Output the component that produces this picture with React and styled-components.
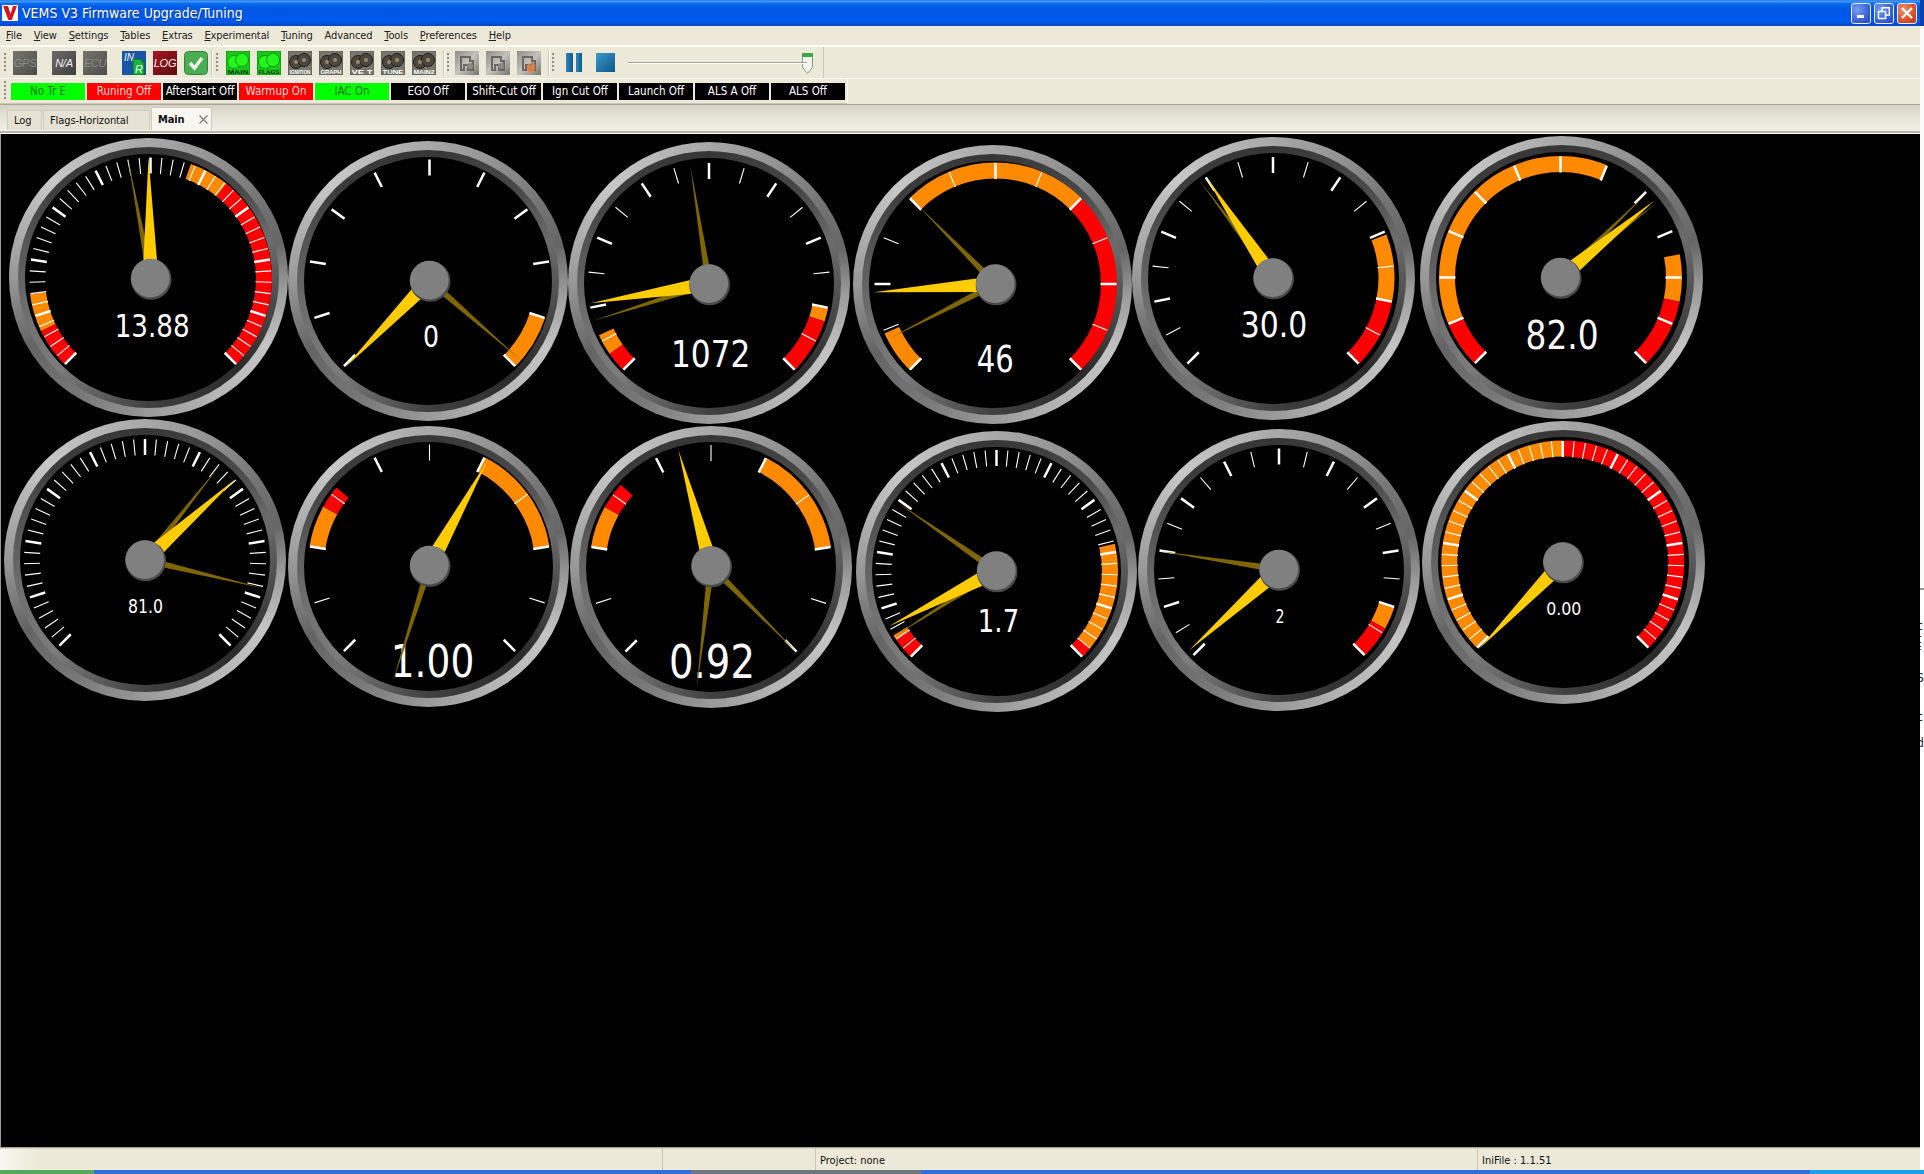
import React from "react";
import styled, { createGlobalStyle } from "styled-components";

const UI_FONT = `"DejaVu Sans Condensed", "Roboto", "Liberation Sans", sans-serif`;

const GlobalStyle = createGlobalStyle`
  html, body {
    margin: 0;
    padding: 0;
    width: 1924px;
    height: 1174px;
    overflow: hidden;
    background: #fff;
  }
`;

const ORANGE = "#ff8a00";
const RED = "#ff0000";

/* screen coordinates, read off the screenshot. x/y/r = bezel, hx/hy = hub */
const gauges = [
  { x: 148, y: 277, r: 139.5, hx: 150, hy: 278, div: 50, major: 5, value: "13.88", fs: 32, tx: 151.7, ty: 336, tw: 75,
    tip: [148, 157], ghosts: [[127.6, 159.3]],
    arcs: [[-135, -115.6, RED], [-115.6, -97.5, ORANGE], [19.4, 38.8, ORANGE], [38.8, 135, RED]] },
  { x: 427.5, y: 280.5, r: 140, hx: 429, hy: 280, div: 10, major: 1, value: "0", fs: 30, tx: 430.5, ty: 346.7, tw: 16,
    tip: [344.8, 366.7], ghosts: [[519.8, 359.3]],
    arcs: [[108, 135, ORANGE]] },
  { x: 709, y: 283, r: 141, hx: 709, hy: 284, div: 16, major: 2, value: "1072", fs: 38, tx: 710.7, ty: 366.7, tw: 79.5,
    tip: [590.3, 303.3], ghosts: [[690.2, 165], [593.3, 320.7]],
    arcs: [[-135, -125, RED], [-125, -115, ORANGE], [101.5, 108, ORANGE], [108, 135, RED]] },
  { x: 992, y: 284.5, r: 139.5, hx: 995, hy: 284, div: 12, major: 2, value: "46", fs: 37, tx: 994.7, ty: 371.7, tw: 37,
    tip: [873, 292.3], ghosts: [[917, 205], [889.3, 338.3]],
    arcs: [[-135, -114, ORANGE], [-45, 45, ORANGE], [45, 135, RED]] },
  { x: 1273.5, y: 278.5, r: 141.5, hx: 1273, hy: 278, div: 16, major: 2, value: "30.0", fs: 35, tx: 1274, ty: 336.7, tw: 66.5,
    tip: [1206.5, 177.7], ghosts: [[1200.4, 181.7]],
    arcs: [[69, 101.5, ORANGE], [101.5, 135, RED]] },
  { x: 1561, y: 277, r: 141.5, hx: 1560, hy: 277, div: 12, major: 1, value: "82.0", fs: 39, tx: 1561.6, ty: 348.3, tw: 73,
    tip: [1654, 200], ghosts: [[1647.4, 191.7], [1657, 201.7]],
    arcs: [[-135, -112.5, RED], [-112.5, 22.5, ORANGE], [79, 101.5, ORANGE], [101.5, 135, RED]] },
  { x: 144.5, y: 560, r: 141, hx: 144.5, hy: 560, div: 50, major: 5, value: "81.0", fs: 20, tx: 145, ty: 613.3, tw: 35,
    tip: [235, 479], ghosts: [[219, 465.7], [263.4, 588.3]], arcs: [] },
  { x: 428, y: 566, r: 140.5, hx: 429, hy: 565, div: 10, major: 2, value: "1.00", fs: 45, tx: 432, ty: 676.7, tw: 83.6,
    tip: [487.6, 459.3], ghosts: [[392.2, 681.7]],
    arcs: [[-81, -61, ORANGE], [-61, -50, RED], [27, 81, ORANGE]] },
  { x: 711, y: 567, r: 141, hx: 711, hy: 566, div: 10, major: 2, value: "0.92", fs: 46, tx: 712, ty: 678.3, tw: 86,
    tip: [678.4, 450], ghosts: [[696.9, 687.7], [797.5, 653]],
    arcs: [[-81, -61, ORANGE], [-61, -48, RED], [27, 81, ORANGE]] },
  { x: 996, y: 571.5, r: 140.5, hx: 996, hy: 571, div: 50, major: 5, value: "1.7", fs: 32, tx: 998, ty: 631.7, tw: 41.4,
    tip: [888.5, 626.3], ghosts: [[896.7, 502.3], [894.8, 635.7]],
    arcs: [[-135, -124, RED], [-124, -122, ORANGE], [77, 129.5, ORANGE], [129.5, 135, RED]] },
  { x: 1279, y: 569.5, r: 141, hx: 1279, hy: 569, div: 20, major: 2, value: "2", fs: 19, tx: 1280, ty: 622, tw: 9,
    tip: [1188.9, 650], ghosts: [[1160.2, 550.7]],
    arcs: [[108, 119, ORANGE], [119, 135, RED]] },
  { x: 1563.7, y: 562.5, r: 141.5, hx: 1563, hy: 562, div: 50, major: 5, value: "0.00", fs: 18.5, tx: 1564, ty: 615, tw: 35.3,
    tip: [1479, 649], ghosts: [],
    arcs: [[-135, 0, ORANGE], [0, 135, RED]] },
];

const menus = [
  ["F", "ile"], ["V", "iew"], ["S", "ettings"], ["T", "ables"], ["E", "xtras"], ["E", "xperimental"],
  ["T", "uning"], ["", "Advanced"], ["T", "ools"], ["P", "references"], ["H", "elp"],
];

const flags = [
  ["No Tr E", "on"], ["Runing Off", "alert"], ["AfterStart Off", "off"], ["Warmup On", "alert"],
  ["IAC On", "on"], ["EGO Off", "off"], ["Shift-Cut Off", "off"], ["Ign Cut Off", "off"],
  ["Launch Off", "off"], ["ALS A Off", "off"], ["ALS Off", "off"],
];

const polar = (cx, cy, r, deg) => {
  const a = (deg * Math.PI) / 180;
  return [cx + r * Math.sin(a), cy - r * Math.cos(a)];
};

const sector = (cx, cy, r0, r1, a0, a1) => {
  const [x0, y0] = polar(cx, cy, r1, a0);
  const [x1, y1] = polar(cx, cy, r1, a1);
  const [x2, y2] = polar(cx, cy, r0, a1);
  const [x3, y3] = polar(cx, cy, r0, a0);
  const large = a1 - a0 > 180 ? 1 : 0;
  return `M${x0} ${y0}A${r1} ${r1} 0 ${large} 1 ${x1} ${y1}L${x2} ${y2}A${r0} ${r0} 0 ${large} 0 ${x3} ${y3}Z`;
};

const needle = (hx, hy, tip, halfBase) => {
  const dx = tip[0] - hx;
  const dy = tip[1] - hy;
  const len = Math.hypot(dx, dy);
  const nx = (-dy / len) * halfBase;
  const ny = (dx / len) * halfBase;
  return `${hx + nx},${hy + ny} ${tip[0]},${tip[1]} ${hx - nx},${hy - ny}`;
};

function Gauge({ g }) {
  const ticks = [];
  for (let i = 0; i <= g.div; i++) {
    const deg = -135 + (i * 270) / g.div;
    const isMajor = i % g.major === 0;
    const [x1, y1] = polar(g.hx, g.hy, 105, deg);
    const [x2, y2] = polar(g.hx, g.hy, 121, deg);
    ticks.push(
      <line key={i} x1={x1} y1={y1} x2={x2} y2={y2} stroke="#fff" strokeWidth={isMajor ? 2.5 : 1.1} />
    );
  }
  return (
    <GaugeBox $x={g.x} $y={g.y} $r={g.r}>
      <Bezel />
      <Dial viewBox={`${g.x - g.r} ${g.y - g.r} ${g.r * 2} ${g.r * 2}`}>
        {g.arcs.map(([a0, a1, color], i) => (
          <path key={i} d={sector(g.hx, g.hy, 105.5, 121.5, a0, a1)} fill={color} />
        ))}
        {ticks}
        <ValueText
          x={g.tx}
          y={g.ty}
          fontSize={g.fs}
          textLength={g.tw}
          lengthAdjust="spacingAndGlyphs"
        >
          {g.value}
        </ValueText>
        {g.ghosts.map((t, i) => (
          <polygon key={i} points={needle(g.hx, g.hy, t, 3.6)} fill="#7f6600" />
        ))}
        <polygon points={needle(g.hx, g.hy, g.tip, 8)} fill="#ffcc00" />
        <circle cx={g.hx + 0.6} cy={g.hy + 0.8} r={20.4} fill="#4a4a4a" />
        <circle cx={g.hx - 0.2} cy={g.hy - 0.4} r={19.4} fill="#808080" />
      </Dial>
    </GaugeBox>
  );
}

function GaugeTile({ label, lit }) {
  const face = lit ? "#25f51f" : "#4c4840";
  const edge = lit ? "#0a9a0a" : "#1e1c18";
  return (
    <svg width="24" height="24" viewBox="0 0 24 24">
      <rect width="24" height="24" fill={lit ? "#17c917" : "#77756c"} stroke={lit ? "#0b8a0b" : "#5c5a52"} />
      <circle cx="8" cy="11" r="6.5" fill={face} stroke={edge} />
      <circle cx="16" cy="9" r="6.5" fill={face} stroke={edge} />
      {!lit && <circle cx="8" cy="11" r="2" fill="#9a8a70" />}
      {!lit && <circle cx="16" cy="9" r="2" fill="#9a8a70" />}
      <text x="12" y="23" textAnchor="middle" fontSize="5.4" fontFamily="Liberation Sans, sans-serif"
        fontWeight="700" fill={lit ? "#04320a" : "#fff"} textLength="21" lengthAdjust="spacingAndGlyphs">
        {label}
      </text>
    </svg>
  );
}

function EngineTile({ flame }) {
  return (
    <svg width="24" height="24" viewBox="0 0 24 24">
      <defs>
        <linearGradient id="engineBg" x1="0" y1="0" x2="1" y2="1">
          <stop offset="0" stopColor="#8f8d88" />
          <stop offset="0.5" stopColor="#c4c2bc" />
          <stop offset="1" stopColor="#77756f" />
        </linearGradient>
      </defs>
      <rect width="24" height="24" fill="url(#engineBg)" />
      <path d="M6 6h9v4h3v9h-5v-5H9v5H6z" fill="none" stroke="#6a6661" strokeWidth="2" />
      <circle cx="15" cy="15" r="3" fill="#8c8983" />
      {flame && <path d="M13 21c-4-2-4-6-1-9 0 3 2 2 2 5 2-2 1-5 0-7 4 3 6 9 1 11z" fill="#e2803a" />}
    </svg>
  );
}

export default function App() {
  return (
    <>
      <GlobalStyle />
      <Screen>
        <Upper>
          <Window>
            <TitleBar>
              <svg width="16" height="16" viewBox="0 0 16 16">
                <rect width="16" height="16" fill="#fff" />
                <polygon points="1,1 6,1 8.5,9 11,1 15,1 9.8,15 6.4,15" fill="#d8141c" />
              </svg>
              <TitleText>VEMS V3 Firmware Upgrade/Tuning</TitleText>
              <WinButtons>
                <WinButton>
                  <svg width="12" height="12" viewBox="0 0 12 12">
                    <rect x="2" y="8" width="7" height="3" fill="#fff" />
                  </svg>
                </WinButton>
                <WinButton>
                  <svg width="14" height="14" viewBox="0 0 14 14" fill="none" stroke="#fff">
                    <rect x="1.5" y="5.5" width="7" height="7" strokeWidth="1.4" />
                    <path d="M5 5V1.7h7.3V9H9" strokeWidth="1.4" />
                  </svg>
                </WinButton>
                <WinButton $close>
                  <svg width="14" height="14" viewBox="0 0 14 14" stroke="#fff" strokeWidth="2.2">
                    <path d="M2 2l10 10M12 2L2 12" />
                  </svg>
                </WinButton>
              </WinButtons>
            </TitleBar>

            <MenuBar>
              {menus.map(([first, rest], i) => (
                <MenuItem key={i}>
                  {first && <u>{first}</u>}
                  {rest}
                </MenuItem>
              ))}
            </MenuBar>

            <ToolRow>
              <Toolbar $width={824}>
                <Grip />
                <ToolGroup $ml={7}>
                  <LcdTile $kind="dim">GPS</LcdTile>
                </ToolGroup>
                <ToolGroup $ml={15}>
                  <LcdTile $kind="mid">N/A</LcdTile>
                  <LcdTile $kind="dim">ECU</LcdTile>
                </ToolGroup>
                <ToolGroup $ml={15}>
                  <svg width="24" height="24" viewBox="0 0 24 24">
                    <rect width="24" height="24" fill="#1b55a8" />
                    <text x="2" y="10" fontSize="10" fontStyle="italic" fill="#fff" fontFamily="Liberation Sans, sans-serif">IN</text>
                    <path d="M11 8h7l4 4v12H11z" fill="#14b43c" stroke="#0a6a22" />
                    <text x="13" y="22" fontSize="11" fontStyle="italic" fill="#fff" fontFamily="Liberation Sans, sans-serif">R</text>
                  </svg>
                  <LcdTile $kind="log">LOG</LcdTile>
                  <svg width="24" height="24" viewBox="0 0 24 24">
                    <rect x="0.5" y="0.5" width="23" height="23" rx="4" fill="#4cae52" stroke="#2f8238" />
                    <path d="M6 12l4.5 5L18 7" fill="none" stroke="#eef5ea" strokeWidth="3.4" />
                  </svg>
                </ToolGroup>
                <Separator $ml={3} />
                <Grip $ml={4} />
                <ToolGroup $ml={8}>
                  <GaugeTile label="MAIN" lit />
                  <GaugeTile label="FLAGS" lit />
                  <GaugeTile label="IGNITION" />
                  <GaugeTile label="GRAPH" />
                  <GaugeTile label="VE T" />
                  <GaugeTile label="TUNE" />
                  <GaugeTile label="MAIN2" />
                </ToolGroup>
                <Separator $ml={7} />
                <Grip $ml={3} />
                <ToolGroup $ml={6}>
                  <EngineTile />
                  <EngineTile />
                  <EngineTile flame />
                </ToolGroup>
                <Separator $ml={7} />
                <Grip $ml={3} />
                <PauseIcon>
                  <span />
                  <span />
                </PauseIcon>
                <StopIcon />
                <Slider>
                  <SliderTrack />
                  <svg width="11" height="21" viewBox="0 0 11 21">
                    <path d="M0.5 3V14.5L5.5 20.5L10.5 14.5V3z" fill="#f4f3ee" stroke="#7aa07a" />
                    <rect x="0" y="0" width="11" height="4" rx="1" fill="#3fa648" />
                  </svg>
                </Slider>
              </Toolbar>
            </ToolRow>

            <FlagRow>
              <FlagBar>
                <Grip />
                <FlagList>
                  {flags.map(([label, state]) => (
                    <Flag key={label} $state={state}>
                      {label}
                    </Flag>
                  ))}
                </FlagList>
              </FlagBar>
            </FlagRow>

            <TabBar>
              <Tab $width={35}>Log</Tab>
              <Tab $width={107}>Flags-Horizontal</Tab>
              <Tab $width={61} $active>
                Main
                <svg width="9" height="9" viewBox="0 0 9 9" stroke="#777" strokeWidth="1.1">
                  <path d="M0.5 0.5l8 8M8.5 0.5l-8 8" />
                </svg>
              </Tab>
            </TabBar>

            <Canvas>
              {gauges.map((g) => (
                <Gauge key={g.value + g.x} g={g} />
              ))}
            </Canvas>

            <StatusBar>
              <StatusCell $width={662} />
              <StatusCell $width={153} />
              <StatusCell $width={662}>Project: none</StatusCell>
              <StatusCell $width={443}>IniFile : 1.1.51</StatusCell>
            </StatusBar>
          </Window>

          <BackWindow>
            <BackTitle />
            <BackPanel />
            <BackDoc>
              {"c\nt\nf\n\nS\n\n\nc\n\nd"}
            </BackDoc>
          </BackWindow>
        </Upper>
        <Taskbar>
          <StartButton />
          <TaskSpace $width={597} />
          <TaskItem />
          <TaskSpace $grow />
          <TrayArea />
        </Taskbar>
      </Screen>
    </>
  );
}

/* ==================== FRAME ==================== */

const Screen = styled.div`
  width: 1924px;
  height: 1174px;
  display: flex;
  flex-direction: column;
  font-family: ${UI_FONT};
`;

const Upper = styled.div`
  flex: 1;
  display: flex;
  min-height: 0;
`;

const Window = styled.div`
  width: 1920px;
  display: flex;
  flex-direction: column;
  background: #ece9d8;
  color: #111;
  font-size: 11px;
`;

const TitleBar = styled.div`
  height: 26px;
  flex: none;
  display: flex;
  align-items: center;
  padding-left: 2px;
  box-sizing: border-box;
  background: linear-gradient(
    180deg,
    #2a7ff0 0%,
    #3d97f7 6%,
    #0a6cf0 14%,
    #0059e4 30%,
    #0056e6 60%,
    #005bef 76%,
    #0054dc 88%,
    #0044c0 100%
  );
`;

const TitleText = styled.span`
  margin-left: 4px;
  color: #fff;
  font-size: 14px;
  text-shadow: 1px 1px 0 #0a3a9a;
`;

const WinButtons = styled.div`
  margin-left: auto;
  display: flex;
  gap: 3px;
  padding-right: 3px;
`;

const WinButton = styled.div`
  width: 20px;
  height: 21px;
  box-sizing: border-box;
  display: flex;
  align-items: center;
  justify-content: center;
  border: 1px solid #e8eefc;
  border-radius: 3px;
  background: ${({ $close }) =>
    $close
      ? "radial-gradient(circle at 30% 30%, #f09070, #d9502a 60%, #b83a18)"
      : "radial-gradient(circle at 30% 30%, #7a9df0, #3a62d8 60%, #2444b8)"};
`;

const MenuBar = styled.div`
  height: 19px;
  flex: none;
  display: flex;
  align-items: center;
  font-size: 11px;
  letter-spacing: -0.1px;
`;

const MenuItem = styled.span`
  padding: 0 5.9px;
  color: #222;
`;

/* ==================== TOOLBARS ==================== */

const ToolRow = styled.div`
  height: 33px;
  flex: none;
  box-sizing: border-box;
  border-top: 2px solid #fbfaf5;
`;

const Toolbar = styled.div`
  width: ${({ $width }) => $width}px;
  height: 100%;
  box-sizing: border-box;
  display: flex;
  align-items: center;
  border-right: 1px solid #c9c6b4;
`;

const Grip = styled.span`
  width: 2px;
  height: 20px;
  margin-left: ${({ $ml }) => $ml ?? 4}px;
  flex: none;
  background: repeating-linear-gradient(180deg, #8f8c7c 0 2px, transparent 2px 4px);
`;

const Separator = styled.span`
  width: 1px;
  height: 26px;
  margin-left: ${({ $ml }) => $ml}px;
  flex: none;
  background: #c9c6b4;
  box-shadow: 1px 0 0 #fff;
`;

const ToolGroup = styled.div`
  display: flex;
  gap: 7px;
  margin-left: ${({ $ml }) => $ml}px;

  svg {
    display: block;
  }
`;

const LcdTile = styled.div`
  width: 24px;
  height: 24px;
  display: flex;
  align-items: center;
  justify-content: center;
  overflow: hidden;
  font: italic 11px "Liberation Sans", sans-serif;
  letter-spacing: -0.2px;
  background: ${({ $kind }) =>
    $kind === "log"
      ? "linear-gradient(135deg, #a81822, #5c0a10)"
      : $kind === "mid"
      ? "linear-gradient(135deg, #6c6c6c, #3e3e3e)"
      : "linear-gradient(135deg, #76766f, #4c4c48)"};
  color: ${({ $kind }) => ($kind === "log" || $kind === "mid" ? "#f2f2f2" : "#8c8c86")};
`;

const PauseIcon = styled.div`
  display: flex;
  gap: 3px;
  margin-left: 12px;

  span {
    width: 6.5px;
    height: 19px;
    background: linear-gradient(90deg, #2a86b8, #0d5c8c);
  }
`;

const StopIcon = styled.div`
  width: 19px;
  height: 19px;
  margin-left: 14px;
  background: linear-gradient(135deg, #3a9ccb, #0c5587);
`;

const Slider = styled.div`
  position: relative;
  width: 185px;
  height: 21px;
  margin: 2px 0 0 13px;
  display: flex;
  align-items: center;
  justify-content: flex-end;
`;

const SliderTrack = styled.div`
  position: absolute;
  left: 0;
  right: 6px;
  top: 9px;
  height: 1px;
  background: #a8a390;
  box-shadow: 0 1px 0 #fff;
`;

const FlagRow = styled.div`
  height: 27px;
  flex: none;
  box-sizing: border-box;
  border-top: 1px solid #fbfaf5;
  border-bottom: 1px solid #aca899;
`;

const FlagBar = styled.div`
  width: 848px;
  height: 100%;
  box-sizing: border-box;
  display: flex;
  align-items: center;
  border-right: 1px solid #fbfaf5;
  border-bottom: 1px solid #c9c6b4;
`;

const FlagList = styled.div`
  display: flex;
  gap: 2px;
  margin-left: 5px;
`;

const FLAG_COLORS = {
  on: { bg: "#00ff00", fg: "#067006" },
  alert: { bg: "#ff0000", fg: "#ffd9d9" },
  off: { bg: "#000", fg: "#fff" },
};

const Flag = styled.div`
  width: 74px;
  height: 17px;
  display: flex;
  align-items: center;
  justify-content: center;
  font-size: 11.5px;
  white-space: nowrap;
  overflow: hidden;
  background: ${({ $state }) => FLAG_COLORS[$state].bg};
  color: ${({ $state }) => FLAG_COLORS[$state].fg};
`;

const TabBar = styled.div`
  height: 29px;
  flex: none;
  box-sizing: border-box;
  display: flex;
  align-items: flex-end;
  padding: 0 0 3px 7px;
  gap: 1px;
  background: linear-gradient(180deg, #d6d3c4 0%, #e8e6da 50%, #f4f2e9 100%);
  border-bottom: 1px solid #fff;
  box-shadow: inset 0 -2px 0 #b9b6a6;
`;

const Tab = styled.div`
  width: ${({ $width }) => $width}px;
  height: ${({ $active }) => ($active ? 23 : 20)}px;
  padding-left: 6px;
  display: flex;
  align-items: center;
  gap: 14px;
  box-sizing: border-box;
  font-size: 11px;
  letter-spacing: -0.1px;
  font-weight: ${({ $active }) => ($active ? 700 : 400)};
  background: ${({ $active }) => ($active ? "#f7f6f0" : "#e6e3d4")};
  border: 1px solid #cfccbc;
  border-bottom: none;
  border-radius: 2px 2px 0 0;
`;

/* ==================== GAUGES ==================== */

const Canvas = styled.div`
  position: relative;
  flex: 1;
  min-height: 0;
  background: #000;
  border-left: 1px solid #9a9a92;
  box-sizing: border-box;
  overflow: hidden;
`;

const GaugeBox = styled.div`
  position: absolute;
  left: ${({ $x, $r }) => $x - $r - 1}px;
  top: ${({ $y, $r }) => $y - $r - 134}px;
  width: ${({ $r }) => $r * 2}px;
  height: ${({ $r }) => $r * 2}px;
`;

const Bezel = styled.div`
  position: absolute;
  inset: 0;
  border-radius: 50%;
  background: conic-gradient(
    #a8a8a8 0deg,
    #929292 30deg,
    #747474 55deg,
    #666666 75deg,
    #9c9c9c 95deg,
    #c4c4c4 120deg,
    #b6b6b6 150deg,
    #9a9a9a 180deg,
    #787878 210deg,
    #646464 240deg,
    #989898 270deg,
    #c8c8c8 315deg,
    #a8a8a8 360deg
  );

  &::before {
    content: "";
    position: absolute;
    inset: 9px;
    border-radius: 50%;
    background: conic-gradient(
      #363636 0deg,
      #484848 45deg,
      #6c6c6c 72deg,
      #4c4c4c 100deg,
      #2a2a2a 135deg,
      #404040 180deg,
      #7c7c7c 225deg,
      #6c6c6c 260deg,
      #3c3c3c 315deg,
      #363636 360deg
    );
  }

  &::after {
    content: "";
    position: absolute;
    inset: 16px;
    border-radius: 50%;
    background: #000;
  }
`;

const Dial = styled.svg`
  position: absolute;
  inset: 0;
  width: 100%;
  height: 100%;
  overflow: visible;
`;

const ValueText = styled.text`
  font-family: "DejaVu Sans", sans-serif;
  fill: #fff;
  text-anchor: middle;
`;

/* ==================== BOTTOM ==================== */

const StatusBar = styled.div`
  height: 23px;
  flex: none;
  box-sizing: border-box;
  display: flex;
  align-items: center;
  border-top: 1px solid #aca899;
  box-shadow: inset 0 1px 0 #d8d5c6;
  background: linear-gradient(90deg, #f8f7f1 0, #ece9d8 40px);
`;

const StatusCell = styled.div`
  width: ${({ $width }) => $width}px;
  height: 100%;
  box-sizing: border-box;
  display: flex;
  align-items: center;
  padding: 3px 0 0 4px;
  border-left: 1px solid #c9c6b4;
  font-size: 11px;

  &:first-child {
    border-left: none;
  }
`;

const BackWindow = styled.div`
  width: 4px;
  display: flex;
  flex-direction: column;
  overflow: hidden;
  background: #fff;
`;

const BackTitle = styled.div`
  height: 26px;
  flex: none;
  background: #0a3fae;
`;

const BackPanel = styled.div`
  height: 564px;
  flex: none;
  background: #fbfbf8;
  border-bottom: 2px solid #9a9a9a;
  box-sizing: border-box;
`;

const BackDoc = styled.div`
  margin: 30px 0 0 -3px;
  white-space: pre-line;
  font-size: 12px;
  line-height: 13px;
  color: #223;
`;

const Taskbar = styled.div`
  height: 4px;
  flex: none;
  display: flex;
  background: #2f6fdc;
`;

const StartButton = styled.div`
  width: 94px;
  background: #57a85e;
`;

const TaskSpace = styled.div`
  width: ${({ $width }) => ($width ? `${$width}px` : "auto")};
  flex: ${({ $grow }) => ($grow ? 1 : "none")};
`;

const TaskItem = styled.div`
  width: 230px;
  background: #6e7680;
`;

const TrayArea = styled.div`
  width: 114px;
  background: #1aa0e8;
`;
